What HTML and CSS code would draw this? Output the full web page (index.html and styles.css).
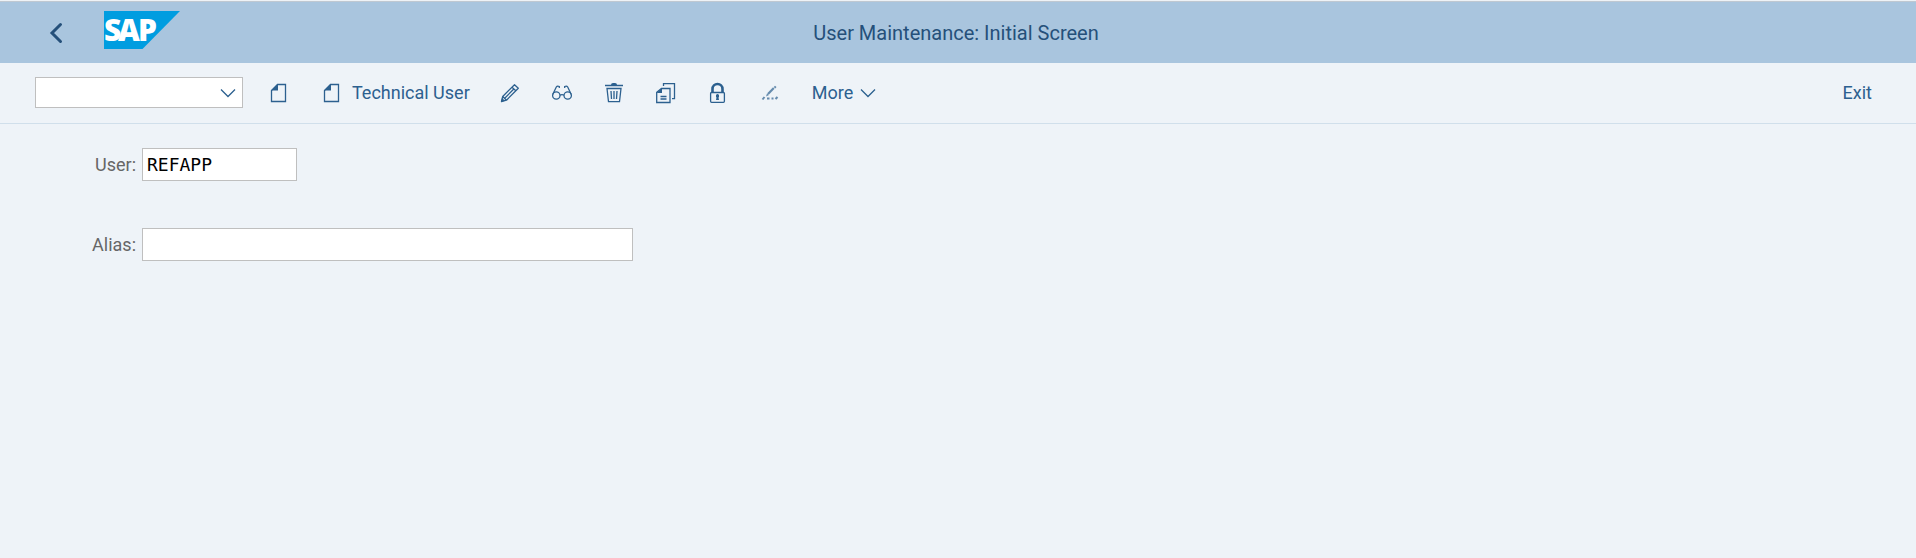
FILE: index.html
```html
<!DOCTYPE html>
<html lang="en">
<head>
<meta charset="utf-8">
<title>User Maintenance: Initial Screen</title>
<link rel="stylesheet" href="styles.css">
</head>
<body>
<header class="shell">
  <div class="shell-start">
    <button class="back" type="button" aria-label="Back">
      <svg width="12" height="20" viewBox="0 0 12 20"><path d="M10.500 1.500 2 10l8.500 8.500" fill="none" stroke="currentColor" stroke-width="3" stroke-linecap="round"/></svg>
    </button>
    <svg class="logo" width="76" height="38" viewBox="0 0 76 38" role="img" aria-label="SAP">
      <path d="M0 0H76L38.500 38H0z" fill="#009de0"/>
      <text class="logo-text" y="30"><tspan x="0">S</tspan><tspan x="14">A</tspan><tspan x="34">P</tspan></text>
    </svg>
  </div>
  <h1 class="title">User Maintenance: Initial Screen</h1>
</header>
<nav class="toolbar" aria-label="Actions">
  <div class="command">
    <input class="field command-input" type="text" aria-label="Command">
    <button class="command-toggle" type="button" aria-label="Show history">
      <svg width="16" height="10" viewBox="0 0 16 10"><path d="M1 1.500 8 8.500l7-7" fill="none" stroke="currentColor" stroke-width="1.300"/></svg>
    </button>
  </div>
  <button class="action" type="button" aria-label="Create">
    <svg class="icon" viewBox="0 0 20 20"><path d="M7.500 1.500h8v17h-14V7.500z" fill="none" stroke="currentColor" stroke-width="1.300"/><path d="M8 1v6.500H1z" fill="currentColor"/></svg>
  </button>
  <button class="action action-technical" type="button">
    <svg class="icon" viewBox="0 0 20 20"><path d="M8.500 1.500h8v17h-14V7.500z" fill="none" stroke="currentColor" stroke-width="1.300"/><path d="M9 1v6.500H2z" fill="currentColor"/></svg>
    Technical User
  </button>
  <button class="action" type="button" aria-label="Change">
    <svg class="icon" viewBox="0 0 20 20"><g fill="none" stroke="currentColor" stroke-width="1.300" stroke-linejoin="round"><path d="m1.500 18.500 1.200-5L14.500 1.700l3.800 3.600L6.500 17.200zM2.700 13.500l3.800 3.700M12 4.200l3.800 3.600M5 15 13.800 6"/></g><path d="m1 19 1-4 3 2.700z" fill="currentColor"/></svg>
  </button>
  <button class="action" type="button" aria-label="Display">
    <svg class="icon" viewBox="0 0 20 20"><g fill="none" stroke="currentColor" stroke-width="1.300"><circle cx="4.300" cy="12.500" r="3.700"/><circle cx="15.700" cy="12.500" r="3.700"/><path d="M8 12.200q2-1 4 0M.7 11.500 4.300 4q1-1.500 3-.5v1.500M19.300 11.500 15.700 4q-1-1.500-3-.5v1.500"/></g></svg>
  </button>
  <button class="action" type="button" aria-label="Delete">
    <svg class="icon" viewBox="0 0 20 20"><path d="M1 2.500h18M3 5.500h14l-1.500 13.200h-11zM2.500 5.500h15M7 8l.5 8M10 8v8M13 8l-.5 8" fill="none" stroke="currentColor" stroke-width="1.300"/><path d="M7 2q0-2 2-2h2q2 0 2 2z" fill="currentColor"/></svg>
  </button>
  <button class="action" type="button" aria-label="Copy">
    <svg class="icon" viewBox="0 0 20 20"><path d="M5.500 5.500h8.500v14H.7V9.200zM7.500 3V.7H18.500v15H16M4.500 13.500h6M4.500 16h6" fill="none" stroke="currentColor" stroke-width="1.300"/><path d="M6 5v5H.5z" fill="currentColor"/></svg>
  </button>
  <button class="action" type="button" aria-label="Lock or unlock">
    <svg class="icon" viewBox="0 0 20 20"><path d="M4.500 9V6a5 5 0 0 1 10 0v3" fill="none" stroke="currentColor" stroke-width="2.600"/><rect x="2.600" y="9.500" width="13.800" height="9.800" rx="1" fill="none" stroke="currentColor" stroke-width="1.300"/><path d="M8 12q1.500-2 3 0v2l-.5.500.5 2.500H8l.5-2.500L8 14z" fill="currentColor"/></svg>
  </button>
  <button class="action" type="button" aria-label="Change password">
    <svg class="icon icon-muted" viewBox="0 0 20 20"><path d="m8 11 5.800-6" fill="none" stroke="currentColor" stroke-width="2.200"/><path d="m13.800 4 1.200-1.200 1.500 1.200-1.200 1.500zM7 10.500l2 1.500-3 1.500z" fill="currentColor"/><path d="m2.500 16.500 2-2.500M7 15.500h2.500M11.500 15.500h2M15.500 16l2-2" fill="none" stroke="currentColor" stroke-width="2"/></svg>
  </button>
  <button class="action action-menu" type="button">
    More
    <svg width="16" height="10" viewBox="0 0 16 10"><path d="M1 1.500 8 8.500l7-7" fill="none" stroke="currentColor" stroke-width="1.300"/></svg>
  </button>
  <button class="action action-exit" type="button">Exit</button>
</nav>
<main>
  <form class="form">
    <label class="label" for="user">User:</label>
    <input class="field field-user" id="user" type="text" value="REFAPP">
    <label class="label" for="alias">Alias:</label>
    <input class="field field-alias" id="alias" type="text">
  </form>
</main>
</body>
</html>
```
FILE: styles.css
```css
* {
  box-sizing: border-box;
}

body {
  margin: 0;
  min-height: 100vh;
  background: #eef3f8;
  border-top: 1px solid #eef2f6;
  color: #2c608f;
  font-family: Roboto, "Liberation Sans", sans-serif;
  font-size: 18px;
}

button {
  padding: 0;
  border: 0;
  background: none;
  color: inherit;
  font: inherit;
  cursor: pointer;
}

svg {
  display: block;
  flex: none;
  overflow: visible;
}

.shell {
  display: grid;
  grid-template-columns: 1fr auto 1fr;
  align-items: center;
  height: 62px;
  padding: 0 50px 0 46px;
  border-top: 1px solid #bfc8d1;
  background: #a9c5de;
  color: #25507a;
}

.shell-start {
  display: flex;
  align-items: center;
  gap: 42px;
}

.back {
  padding: 0 0 0 4px;
}

.logo {
  margin-bottom: 5px;
}

.logo-text {
  fill: #fff;
  font-family: "Open Sans", sans-serif;
  font-size: 30px;
  font-weight: 800;
}

.title {
  margin: 0;
  font-size: 20px;
  font-weight: 400;
  line-height: 24px;
}

.toolbar {
  display: flex;
  align-items: center;
  gap: 32px;
  height: 61px;
  padding: 0 44px 0 35px;
  border-bottom: 1px solid #d0dfeb;
}

.field {
  height: 33px;
  padding: 0 4px;
  border: 1px solid #bfbfbf;
  border-radius: 0;
  outline: 0;
  background: #fff;
  color: #000;
  font-family: "DejaVu Sans Mono", monospace;
  font-size: 18px;
}

.command {
  display: flex;
  align-items: center;
  width: 208px;
  height: 31px;
  margin: 0 -5px 2px 0;
  border: 1px solid #bfbfbf;
  background: #fff;
}

.command-input {
  flex: 1;
  min-width: 0;
  height: 100%;
  border: 0;
}

.command-toggle {
  padding: 2px 6px 0;
}

.action {
  display: flex;
  align-items: center;
  gap: 10px;
  line-height: 24px;
}

.action-technical {
  margin-right: -2px;
}

.action-menu {
  gap: 7px;
}

.action-exit {
  margin-left: auto;
}

.icon {
  width: 20px;
  height: 20px;
}

.icon-muted {
  opacity: 0.7;
}

.form {
  display: grid;
  grid-template-columns: 44px 1fr;
  align-items: center;
  gap: 47px 6px;
  padding: 24px 92px;
}

.label {
  color: #666;
  text-align: right;
  white-space: nowrap;
}

.field-user {
  width: 155px;
}

.field-alias {
  width: 491px;
  max-width: 100%;
}
```
